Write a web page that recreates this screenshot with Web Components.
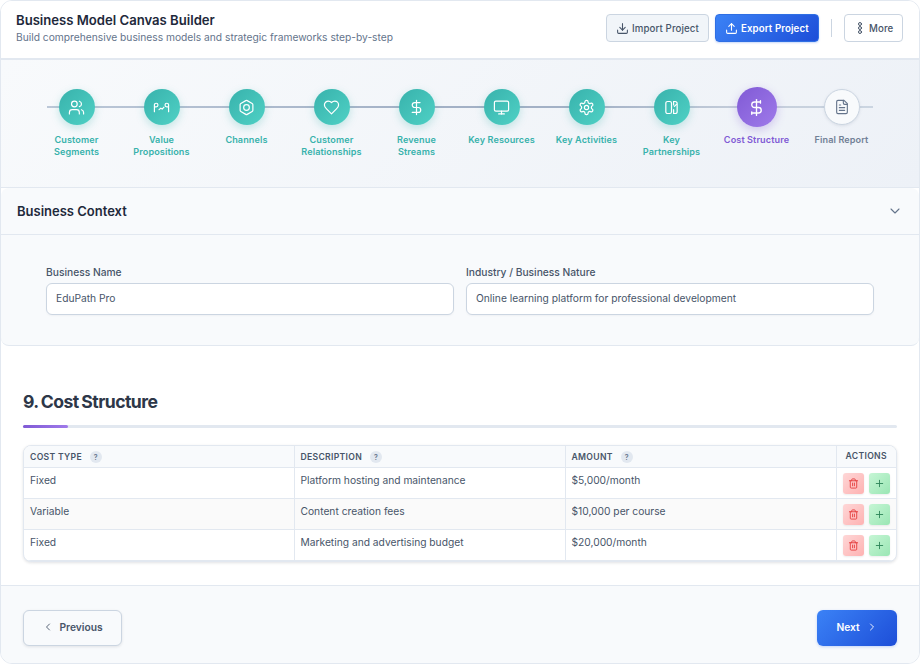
<!DOCTYPE html>
<html lang="en">
<head>
<meta charset="utf-8">
<title>Business Model Canvas Builder</title>
<style>
  html, body { margin: 0; height: 100%; background: #fff; }
  body { font-family: Inter, "Liberation Sans", sans-serif; color: #1e293b; }
</style>
</head>
<body>
<bmc-app>
  <bmc-header slot="header" heading="Business Model Canvas Builder" sub="Build comprehensive business models and strategic frameworks step-by-step">
    <bmc-button variant="soft" icon="download">Import Project</bmc-button>
    <bmc-button variant="primary" icon="upload">Export Project</bmc-button>
    <bmc-divider></bmc-divider>
    <bmc-button variant="ghost" icon="more">More</bmc-button>
  </bmc-header>

  <bmc-stepper slot="stepper">
    <bmc-step state="done" icon="users">Customer Segments</bmc-step>
    <bmc-step state="done" icon="value">Value Propositions</bmc-step>
    <bmc-step state="done" icon="hexagon">Channels</bmc-step>
    <bmc-step state="done" icon="heart">Customer Relationships</bmc-step>
    <bmc-step state="done" icon="dollar">Revenue Streams</bmc-step>
    <bmc-step state="done" icon="monitor">Key Resources</bmc-step>
    <bmc-step state="done" icon="gear">Key Activities</bmc-step>
    <bmc-step state="done" icon="partners">Key Partnerships</bmc-step>
    <bmc-step state="active" icon="dollarTicks">Cost Structure</bmc-step>
    <bmc-step state="todo" icon="file">Final Report</bmc-step>
  </bmc-stepper>

  <bmc-context slot="context" heading="Business Context">
    <bmc-field label="Business Name" value="EduPath Pro"></bmc-field>
    <bmc-field label="Industry / Business Nature" value="Online learning platform for professional development"></bmc-field>
  </bmc-context>

  <bmc-section heading="9. Cost Structure">
    <bmc-table></bmc-table>
  </bmc-section>

  <bmc-footer slot="footer">
    <bmc-nav-button direction="prev">Previous</bmc-nav-button>
    <bmc-nav-button direction="next">Next</bmc-nav-button>
  </bmc-footer>
</bmc-app>

<script>
const ICONS = {
  users: '<path d="M16 21v-2a4 4 0 0 0-4-4H6a4 4 0 0 0-4 4v2"/><circle cx="9" cy="7" r="4"/><path d="M22 21v-2a4 4 0 0 0-3-3.87"/><path d="M16 3.13a4 4 0 0 1 0 7.75"/>',
  value: '<path d="M2 18V8.5a2.5 2.5 0 1 1 2.5 2.5H2"/><path d="M22 18V8.5a2.5 2.5 0 1 0-2.5 2.5H22"/><path d="M8.5 15l2.5-2 2 1.2 2.5-2.7"/>',
  hexagon: '<path d="M21 16V8a2 2 0 0 0-1-1.73l-7-4a2 2 0 0 0-2 0l-7 4A2 2 0 0 0 3 8v8a2 2 0 0 0 1 1.73l7 4a2 2 0 0 0 2 0l7-4A2 2 0 0 0 21 16z"/><circle cx="12" cy="12" r="4"/>',
  heart: '<path d="M19 14c1.49-1.46 3-3.21 3-5.5A5.5 5.5 0 0 0 16.5 3c-1.76 0-3 .5-4.5 2-1.5-1.5-2.74-2-4.5-2A5.5 5.5 0 0 0 2 8.5c0 2.3 1.5 4.05 3 5.5l7 7Z"/>',
  dollar: '<line x1="12" y1="2" x2="12" y2="22"/><path d="M17 5H9.5a3.5 3.5 0 0 0 0 7h5a3.5 3.5 0 0 1 0 7H6"/>',
  dollarTicks: '<line x1="12" y1="2" x2="12" y2="22"/><path d="M17 5H9.5a3.5 3.5 0 0 0 0 7h5a3.5 3.5 0 0 1 0 7H6"/><path d="M17 3.5v3"/><path d="M6 17.5v3"/>',
  monitor: '<rect x="2" y="3" width="20" height="14" rx="2"/><line x1="8" y1="21" x2="16" y2="21"/><line x1="12" y1="17" x2="12" y2="21"/>',
  gear: '<path d="M12.22 2h-.44a2 2 0 0 0-2 2v.18a2 2 0 0 1-1 1.73l-.43.25a2 2 0 0 1-2 0l-.15-.08a2 2 0 0 0-2.73.73l-.22.38a2 2 0 0 0 .73 2.73l.15.1a2 2 0 0 1 1 1.72v.51a2 2 0 0 1-1 1.74l-.15.09a2 2 0 0 0-.73 2.73l.22.38a2 2 0 0 0 2.73.73l.15-.08a2 2 0 0 1 2 0l.43.25a2 2 0 0 1 1 1.73V20a2 2 0 0 0 2 2h.44a2 2 0 0 0 2-2v-.18a2 2 0 0 1 1-1.73l.43-.25a2 2 0 0 1 2 0l.15.08a2 2 0 0 0 2.73-.73l.22-.39a2 2 0 0 0-.73-2.73l-.15-.08a2 2 0 0 1-1-1.74v-.5a2 2 0 0 1 1-1.74l.15-.09a2 2 0 0 0 .73-2.73l-.22-.38a2 2 0 0 0-2.73-.73l-.15.08a2 2 0 0 1-2 0l-.43-.25a2 2 0 0 1-1-1.73V4a2 2 0 0 0-2-2z"/><circle cx="12" cy="12" r="3"/>',
  partners: '<rect x="4" y="3.5" width="8" height="17" rx="2.5"/><path d="M15 3.5h2a3 3 0 0 1 3 3v11a3 3 0 0 1-3 3h-2"/><path d="M15 3.5v5"/><path d="M15 15v5.5"/><path d="M16 10.5l3-3"/>',
  file: '<path d="M15 2H6a2 2 0 0 0-2 2v16a2 2 0 0 0 2 2h12a2 2 0 0 0 2-2V7Z"/><path d="M14 2v4a2 2 0 0 0 2 2h4"/><path d="M10 9H8"/><path d="M16 13H8"/><path d="M16 17H8"/>',
  download: '<path d="M21 15v4a2 2 0 0 1-2 2H5a2 2 0 0 1-2-2v-4"/><polyline points="7 10 12 15 17 10"/><line x1="12" y1="15" x2="12" y2="3"/>',
  upload: '<path d="M21 15v4a2 2 0 0 1-2 2H5a2 2 0 0 1-2-2v-4"/><polyline points="17 8 12 3 7 8"/><line x1="12" y1="3" x2="12" y2="15"/>',
  more: '<circle cx="12" cy="4" r="3"/><circle cx="12" cy="12" r="3"/><circle cx="12" cy="20" r="3"/>',
  chevronDown: '<polyline points="6 9 12 15 18 9"/>',
  chevronLeft: '<polyline points="15 18 9 12 15 6"/>',
  chevronRight: '<polyline points="9 18 15 12 9 6"/>',
  trash: '<path d="M3 6h18"/><path d="M19 6v14a2 2 0 0 1-2 2H7a2 2 0 0 1-2-2V6"/><path d="M8 6V4a2 2 0 0 1 2-2h4a2 2 0 0 1 2 2v2"/><path d="M10 11v6"/><path d="M14 11v6"/>',
  plus: '<line x1="12" y1="5" x2="12" y2="19"/><line x1="5" y1="12" x2="19" y2="12"/>'
}

function svg(name, size, width = 2) {
  return `<svg width="${size}" height="${size}" viewBox="0 0 24 24" fill="none" stroke="currentColor" stroke-width="${width}" stroke-linecap="round" stroke-linejoin="round" aria-hidden="true">${ICONS[name]}</svg>`
}

class BmcApp extends HTMLElement {
  constructor() {
    super()
    this.attachShadow({ mode: 'open' })
    this.shadowRoot.innerHTML = `
      <style>
        :host {
          display: flex;
          flex-direction: column;
          box-sizing: border-box;
          width: 920px;
          height: 664px;
          border: 1px solid #e2e8f0;
          border-radius: 12px;
          background: #fff;
          overflow: hidden;
        }
        main { flex: 1; min-height: 0; }
      </style>
      <slot name="header"></slot>
      <slot name="stepper"></slot>
      <slot name="context"></slot>
      <main><slot></slot></main>
      <slot name="footer"></slot>
    `
  }
}

class BmcHeader extends HTMLElement {
  constructor() {
    super()
    this.attachShadow({ mode: 'open' })
    this.shadowRoot.innerHTML = `
      <style>
        :host {
          display: flex;
          align-items: flex-start;
          justify-content: space-between;
          box-sizing: border-box;
          height: 57px;
          padding: 12px 16px 0 15px;
          background: #fff;
        }
        h1 { margin: 0; font-size: 13.12px; line-height: 14px; font-weight: 600; color: #1e293b; }
        p { margin: 3px 0 0; font-size: 10.24px; line-height: 14px; color: #64748b; }
        nav { display: flex; align-items: center; gap: 6px; margin-top: 1px; }
      </style>
      <div><h1></h1><p></p></div>
      <nav><slot></slot></nav>
    `
    this.shadowRoot.querySelector('h1').textContent = this.getAttribute('heading')
    this.shadowRoot.querySelector('p').textContent = this.getAttribute('sub')
  }
}

class BmcDivider extends HTMLElement {
  constructor() {
    super()
    this.attachShadow({ mode: 'open' })
    this.shadowRoot.innerHTML = `
      <style>
        :host { display: block; width: 1px; height: 18px; margin: 0 6px; background: #cbd5e1; }
      </style>
    `
  }
}

class BmcButton extends HTMLElement {
  constructor() {
    super()
    this.attachShadow({ mode: 'open' })
    const icon = this.getAttribute('icon')
    this.shadowRoot.innerHTML = `
      <style>
        :host {
          display: inline-flex;
          align-items: center;
          gap: 3px;
          box-sizing: border-box;
          height: 28px;
          padding: 0 0 0 9px;
          border-radius: 4px;
          border: 1px solid #cbd5e1;
          font-size: 9.7px;
          font-weight: 500;
          color: #475569;
          white-space: nowrap;
          letter-spacing: 0.1px;
        }
        :host([variant="soft"]) { background: #f1f5f9; width: 103px; }
        :host([variant="primary"]) {
          background: linear-gradient(135deg, #3b82f6, #1d4ed8);
          border-color: #2f6fe4;
          color: #fff;
          font-weight: 600;
          width: 104px;
          box-shadow: 0 1px 2px rgba(37, 99, 235, .25);
        }
        :host([variant="ghost"]) { background: #fff; width: 59px; }
        svg { flex: none; }
      </style>
      ${svg(icon, icon === 'more' ? 12 : 13, 2)}
      <slot></slot>
    `
  }
}

class BmcStepper extends HTMLElement {
  constructor() {
    super()
    this.attachShadow({ mode: 'open' })
    this.shadowRoot.innerHTML = `
      <style>
        :host {
          display: block;
          box-sizing: border-box;
          height: 130px;
          padding: 27px 34px 0 33px;
          background: linear-gradient(135deg, #f8fafc, #edf1f7);
          border-top: 2px solid #e2e8f0;
          border-bottom: 1px solid #e2e8f0;
        }
        .track { position: relative; display: flex; }
        .track::before {
          content: "";
          position: absolute;
          left: 13px;
          right: 12px;
          top: 19px;
          height: 2px;
          background: linear-gradient(90deg, #bcc8d8 0, #a3b1c6 45%, #a3b1c6 65%, #c5cedb 85%, #cbd5e1 100%);
        }
        ::slotted(bmc-step) { flex: 0 0 85px; }
      </style>
      <div class="track"><slot></slot></div>
    `
  }
}

class BmcStep extends HTMLElement {
  constructor() {
    super()
    this.attachShadow({ mode: 'open' })
    const state = this.getAttribute('state')
    const size = state === 'active' ? 19 : state === 'todo' ? 16 : 17
    this.shadowRoot.innerHTML = `
      <style>
        :host {
          display: flex;
          flex-direction: column;
          align-items: center;
          position: relative;
          font-size: 9.1px;
          line-height: 12px;
          font-weight: 600;
          text-align: center;
          letter-spacing: 0.1px;
        }
        .slot-box { height: 40px; display: flex; align-items: center; justify-content: center; }
        .dot {
          box-sizing: border-box;
          width: 36px;
          height: 36px;
          border-radius: 50%;
          display: flex;
          align-items: center;
          justify-content: center;
          color: #fff;
          background: linear-gradient(135deg, #38b2ac, #4fd1c5);
          box-shadow: 0 3px 8px rgba(56, 178, 172, .28);
        }
        .label { margin-top: 7px; max-width: 72px; color: #38b2ac; }
        :host([state="active"]) .dot {
          width: 40px;
          height: 40px;
          background: linear-gradient(135deg, #805ad5, #9f7aea);
          box-shadow: 0 3px 10px rgba(128, 90, 213, .3);
        }
        :host([state="active"]) .label { color: #805ad5; max-width: 80px; }
        :host([state="todo"]) .dot {
          width: 36px;
          height: 36px;
          background: #f8fafc;
          border: 1px solid #cbd5e1;
          color: #64748b;
          box-shadow: 0 1px 3px rgba(100, 116, 139, .15);
        }
        :host([state="todo"]) .label { color: #718096; }
      </style>
      <div class="slot-box"><div class="dot">${svg(this.getAttribute('icon'), size, 1.7)}</div></div>
      <div class="label"><slot></slot></div>
    `
  }
}

class BmcContext extends HTMLElement {
  constructor() {
    super()
    this.attachShadow({ mode: 'open' })
    this.shadowRoot.innerHTML = `
      <style>
        :host {
          display: block;
          box-sizing: border-box;
          height: 158px;
          background: #f8fafc;
          border-bottom: 1px solid #e2e8f0;
          border-radius: 8px;
        }
        header {
          display: flex;
          align-items: center;
          justify-content: space-between;
          box-sizing: border-box;
          height: 47px;
          padding: 0 16px;
          border-bottom: 1px solid #e2e8f0;
          color: #64748b;
        }
        h2 { margin: 0; font-size: 13px; font-weight: 600; color: #1e293b; }
        .grid { display: grid; grid-template-columns: 408px 408px; gap: 12px; padding: 30px 0 0 45px; }
      </style>
      <header><h2></h2>${svg('chevronDown', 16, 1.6)}</header>
      <div class="grid"><slot></slot></div>
    `
    this.shadowRoot.querySelector('h2').textContent = this.getAttribute('heading')
  }
}

class BmcField extends HTMLElement {
  constructor() {
    super()
    this.attachShadow({ mode: 'open' })
    this.shadowRoot.innerHTML = `
      <style>
        :host { display: block; }
        label { display: block; font-size: 10.24px; line-height: 14px; font-weight: 500; color: #475569; margin-bottom: 4px; }
        .input {
          box-sizing: border-box;
          height: 32px;
          padding: 0 9px 2px;
          display: flex;
          align-items: center;
          background: #fff;
          border: 1px solid #cbd5e1;
          border-radius: 6px;
          font-size: 10.24px;
          color: #475569;
          box-shadow: 0 1px 2px rgba(15, 23, 42, .04);
        }
      </style>
      <label></label>
      <div class="input"></div>
    `
    this.shadowRoot.querySelector('label').textContent = this.getAttribute('label')
    this.shadowRoot.querySelector('.input').textContent = this.getAttribute('value')
  }
}

class BmcSection extends HTMLElement {
  constructor() {
    super()
    this.attachShadow({ mode: 'open' })
    this.shadowRoot.innerHTML = `
      <style>
        :host { display: block; padding: 44px 22px 0 22px; }
        h2 { margin: 0; font-size: 17.6px; line-height: 24px; font-weight: 700; color: #2d3748; letter-spacing: -0.55px; word-spacing: -1px; }
        .rule { position: relative; height: 3px; margin-top: 11px; background: #e2e8f0; border-radius: 2px; }
        .rule::before { content: ""; position: absolute; left: 0; top: 0; width: 45px; height: 3px; border-radius: 2px; background: linear-gradient(90deg, #805ad5, #9f7aea); }
        .body { margin-top: 17px; }
      </style>
      <h2></h2>
      <div class="rule"></div>
      <div class="body"><slot></slot></div>
    `
    this.shadowRoot.querySelector('h2').textContent = this.getAttribute('heading')
  }
}

class BmcTable extends HTMLElement {
  #columns = ['Cost Type', 'Description', 'Amount']
  #rows = [
    ['Fixed', 'Platform hosting and maintenance', '$5,000/month'],
    ['Variable', 'Content creation fees', '$10,000 per course'],
    ['Fixed', 'Marketing and advertising budget', '$20,000/month']
  ]

  constructor() {
    super()
    this.attachShadow({ mode: 'open' })
    const heads = this.#columns.map(c => `<th>${c}<span class="help">?</span></th>`).join('')
    const rows = this.#rows.map(r => `
      <tr>
        ${r.map(c => `<td>${c}</td>`).join('')}
        <td class="actions"><div>
          <span class="act del">${svg('trash', 11, 2)}</span>
          <span class="act add">${svg('plus', 11, 2)}</span>
        </div></td>
      </tr>`).join('')
    this.shadowRoot.innerHTML = `
      <style>
        :host {
          display: block;
          border: 1px solid #e2e8f0;
          border-radius: 8px;
          overflow: hidden;
          box-shadow: 0 1px 3px rgba(15, 23, 42, .12);
          background: #fff;
        }
        table { width: 100%; border-collapse: collapse; table-layout: fixed; font-size: 10.24px; color: #475569; }
        th {
          height: 21px;
          padding: 2px 6px 0;
          box-sizing: border-box;
          text-align: left;
          background: #f8fafc;
          font-size: 8.64px;
          font-weight: 600;
          letter-spacing: 0.3px;
          text-transform: uppercase;
          color: #475569;
          border-bottom: 1px solid #e2e8f0;
          border-right: 1px solid #e2e8f0;
        }
        th:last-child { border-right: 0; text-align: center; padding: 0; }
        td {
          height: 31px;
          box-sizing: border-box;
          padding: 6px 6px 0;
          vertical-align: top;
          line-height: 13px;
          border-bottom: 1px solid #e2e8f0;
          border-right: 1px solid #e2e8f0;
        }
        tr:nth-child(even) td { background: #fafafa; }
        td.actions { border-right: 0; padding: 5px 0 0; }
        td.actions div { display: flex; justify-content: center; gap: 5px; }
        .help {
          display: inline-flex;
          align-items: center;
          justify-content: center;
          width: 12px;
          height: 12px;
          margin-left: 8px;
          border-radius: 50%;
          background: #e2e8f0;
          color: #64748b;
          font-size: 7px;
          vertical-align: 0;
        }
        .act {
          width: 21px;
          height: 21px;
          border-radius: 3px;
          display: flex;
          align-items: center;
          justify-content: center;
          box-shadow: 0 1px 2px rgba(15, 23, 42, .08);
        }
        .del { background: linear-gradient(135deg, #fed7d7, #feb2b2); color: #e53e3e; }
        .add { background: linear-gradient(135deg, #c6f6d5, #9ae6b4); color: #2f855a; }
      </style>
      <table>
        <colgroup><col style="width:270px"><col style="width:271px"><col style="width:271px"><col></colgroup>
        <thead><tr>${heads}<th>Actions</th></tr></thead>
        <tbody>${rows}</tbody>
      </table>
    `
  }
}

class BmcFooter extends HTMLElement {
  constructor() {
    super()
    this.attachShadow({ mode: 'open' })
    this.shadowRoot.innerHTML = `
      <style>
        :host {
          display: flex;
          align-items: flex-start;
          justify-content: space-between;
          box-sizing: border-box;
          height: 78px;
          padding: 24px 22px 0;
          background: #f8fafc;
          border-top: 1px solid #e2e8f0;
        }
      </style>
      <slot></slot>
    `
  }
}

class BmcNavButton extends HTMLElement {
  constructor() {
    super()
    this.attachShadow({ mode: 'open' })
    const prev = this.getAttribute('direction') === 'prev'
    this.shadowRoot.innerHTML = `
      <style>
        :host {
          display: inline-flex;
          align-items: center;
          justify-content: center;
          box-sizing: border-box;
          height: 36px;
          padding-bottom: 2px;
          border-radius: 6px;
          font-size: 10.24px;
          font-weight: 600;
        }
        :host([direction="prev"]) {
          width: 99px;
          gap: 5px;
          background: #f8fafc;
          border: 1px solid #cbd5e1;
          color: #475569;
          box-shadow: 0 1px 3px rgba(15, 23, 42, .1);
        }
        :host([direction="next"]) {
          width: 80px;
          gap: 6px;
          background: linear-gradient(135deg, #3b82f6, #1d4ed8);
          color: #fff;
          box-shadow: 0 1px 3px rgba(37, 99, 235, .25);
        }
      </style>
      ${prev ? svg('chevronLeft', 12, 1.8) : ''}
      <slot></slot>
      ${prev ? '' : svg('chevronRight', 12, 1.8)}
    `
  }
}

customElements.define('bmc-app', BmcApp)
customElements.define('bmc-header', BmcHeader)
customElements.define('bmc-divider', BmcDivider)
customElements.define('bmc-button', BmcButton)
customElements.define('bmc-stepper', BmcStepper)
customElements.define('bmc-step', BmcStep)
customElements.define('bmc-context', BmcContext)
customElements.define('bmc-field', BmcField)
customElements.define('bmc-section', BmcSection)
customElements.define('bmc-table', BmcTable)
customElements.define('bmc-footer', BmcFooter)
customElements.define('bmc-nav-button', BmcNavButton)
</script>
</body>
</html>
